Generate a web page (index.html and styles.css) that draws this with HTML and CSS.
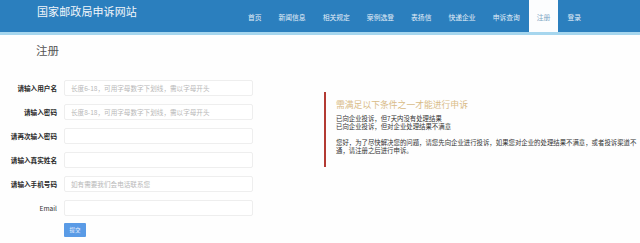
FILE: index.html
```html
<!DOCTYPE html>
<html lang="zh-CN">
<head>
<meta charset="utf-8">
<title>国家邮政局申诉网站 - 注册</title>
<link rel="stylesheet" href="styles.css">
</head>
<body>
<header class="topbar">
  <div class="brand">国家邮政局申诉网站</div>
  <nav class="nav">
    <a class="nav-item" href="#">首页</a>
    <a class="nav-item" href="#">新闻信息</a>
    <a class="nav-item" href="#">相关规定</a>
    <a class="nav-item" href="#">案例选登</a>
    <a class="nav-item" href="#">表扬信</a>
    <a class="nav-item" href="#">快递企业</a>
    <a class="nav-item" href="#">申诉查询</a>
    <a class="nav-item active" href="#">注册</a>
    <a class="nav-item" href="#">登录</a>
  </nav>
</header>
<main class="page">
  <h1 class="page-title">注册</h1>
  <div class="content">
    <form class="form">
      <div class="row"><label class="label strong">请输入用户名</label><input class="field" placeholder="长度6-18，可用字母数字下划线，需以字母开头"></div>
      <div class="row"><label class="label strong">请输入密码</label><input class="field" placeholder="长度8-18，可用字母数字下划线，需以字母开头"></div>
      <div class="row"><label class="label strong">请再次输入密码</label><input class="field"></div>
      <div class="row"><label class="label strong">请输入真实姓名</label><input class="field"></div>
      <div class="row"><label class="label strong">请输入手机号码</label><input class="field" placeholder="如有需要我们会电话联系您"></div>
      <div class="row"><label class="label">Email</label><input class="field"></div>
      <div class="row actions"><span class="label"></span><button class="submit" type="button">提交</button></div>
    </form>
    <aside class="notice">
      <h2 class="notice-title">需满足以下条件之一才能进行申诉</h2>
      <p class="notice-lines">已向企业投诉，但7天内没有处理结果<br>已向企业投诉，但对企业处理结果不满意</p>
      <p class="notice-text">您好，为了尽快解决您的问题，请您先向企业进行投诉，如果您对企业的处理结果不满意，或者投诉渠道不通，请注册之后进行申诉。</p>
    </aside>
  </div>
</main>
</body>
</html>
```
FILE: styles.css
```css
* { box-sizing: border-box; }
html, body { margin: 0; padding: 0; background: #fefefe; }
body {
  font-family: "Noto Sans CJK SC", "Noto Sans", "Liberation Sans", sans-serif;
  color: #333;
}
.topbar {
  height: 35px;
  background: #2b7fbe;
  border-bottom: 3px solid #a6d6ee;
  display: flex;
  align-items: stretch;
  justify-content: space-between;
  padding: 0 51px 0 37px;
}
.brand {
  color: #f2f6fa;
  font-size: 11px;
  line-height: 11px;
  padding-top: 6px;
  letter-spacing: 0.1px;
}
.nav {
  display: flex;
  align-items: stretch;
}
.nav-item {
  display: flex;
  align-items: center;
  padding: 2px 8px 0;
  font-size: 6.8px;
  color: #e3eef8;
  text-decoration: none;
  margin-left: 1px;
}
.nav-item.active {
  background: #fcfdfe;
  color: #7fa6c4;
}
.page { padding: 0; }
.page-title {
  margin: 0;
  padding: 9px 0 0 36px;
  font-size: 11.5px;
  line-height: 12px;
  font-weight: normal;
  color: #555;
  height: 45px;
}
.content {
  display: flex;
  align-items: flex-start;
}
.form {
  width: 324px;
  flex: none;
  display: flex;
  flex-direction: column;
  gap: 8px;
}
.row {
  display: flex;
  align-items: center;
  gap: 7px;
  height: 16px;
}
.label {
  width: 57px;
  text-align: right;
  font-size: 6.6px;
  color: #333;
}
.label.strong { font-weight: bold; color: #2a2a2a; }
.field {
  width: 189px;
  height: 16px;
  border: 1px solid #eeeeee;
  border-radius: 2px;
  background: #fff;
  padding: 0 6px;
  font-family: inherit;
  font-size: 6.6px;
  outline: none;
}
.field::placeholder { color: #b8b8b8; }
.actions { height: 14px; margin-top: -1px; }
.submit {
  width: 22px;
  height: 14px;
  border: 0;
  border-radius: 1px;
  background: #5a9be6;
  color: #eaf2ff;
  font-family: inherit;
  font-size: 5.5px;
  padding: 0;
}
.notice {
  margin-top: 12px;
  border-left: 2px solid #b33a33;
  padding: 7px 0 11px 10px;
  width: 314px;
  flex: none;
}
.notice-title {
  margin: 0 0 4px;
  font-size: 8.8px;
  line-height: 12px;
  font-weight: normal;
  color: #d9bb86;
}
.notice-lines {
  margin: 0 0 7px;
  font-size: 6.4px;
  line-height: 8.4px;
  color: #333;
}
.notice-text {
  margin: 0;
  font-size: 6.4px;
  line-height: 8.4px;
  color: #333;
}
```
